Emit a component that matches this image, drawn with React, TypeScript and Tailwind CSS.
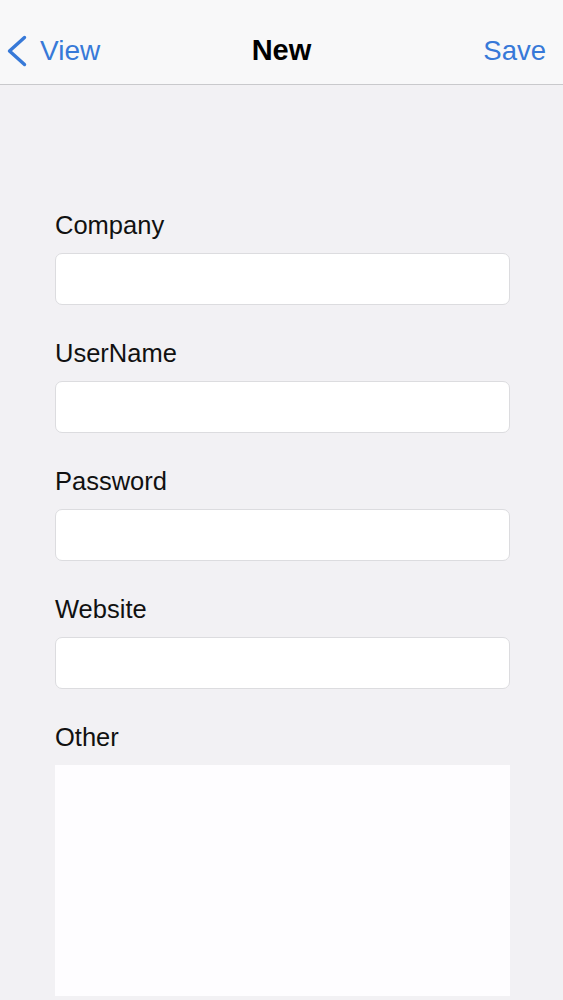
import { useState } from 'react'

const fields = ['Company', 'UserName', 'Password', 'Website']

export default function App() {
  const [values, setValues] = useState<Record<string, string>>({})
  const [other, setOther] = useState('')

  return (
    <div
      className="min-h-[1000px] w-full bg-[#f2f1f4] text-black"
      style={{ fontFamily: '"Liberation Sans", Arial, sans-serif' }}
    >
      {/* nav bar */}
      <header className="relative flex h-[85px] items-center justify-between border-b border-[#c9c9cc] bg-[#f8f8f9] px-[7px] pt-[17px]">
        <button className="flex items-center gap-[13px] text-[28px] text-[#3779d8]">
          <svg width="20" height="32" viewBox="0 0 20 32" fill="none">
            <path
              d="M17.5 2.5 L2.5 16 L17.5 29.5"
              stroke="#3779d8"
              strokeWidth="3.4"
              strokeLinecap="round"
              strokeLinejoin="round"
            />
          </svg>
          <span>View</span>
        </button>
        <h1 className="absolute left-1/2 top-[17px] flex h-[67px] -translate-x-1/2 items-center text-[29px] font-bold">
          New
        </h1>
        <button className="pr-[10px] text-[27.5px] text-[#3779d8]">Save</button>
      </header>

      <main className="pl-[55px] pr-[53px] pt-[124px]">
        {fields.map((f) => (
          <div key={f} className="mb-[32px]">
            <label className="mb-[12px] block text-[25.5px] leading-[32px] text-[#111]">{f}</label>
            <input
              value={values[f] || ''}
              onChange={(e) => setValues({ ...values, [f]: e.target.value })}
              className="block h-[52px] w-full rounded-[7px] border border-[#dcdcdf] bg-white px-3 text-[22px] outline-none"
            />
          </div>
        ))}
        <label className="mb-[12px] block text-[25.5px] leading-[32px] text-[#111]">Other</label>
        <textarea
          value={other}
          onChange={(e) => setOther(e.target.value)}
          className="block h-[231px] w-full resize-none bg-[#fefdff] p-2 text-[20px] outline-none"
        />
      </main>
    </div>
  )
}
